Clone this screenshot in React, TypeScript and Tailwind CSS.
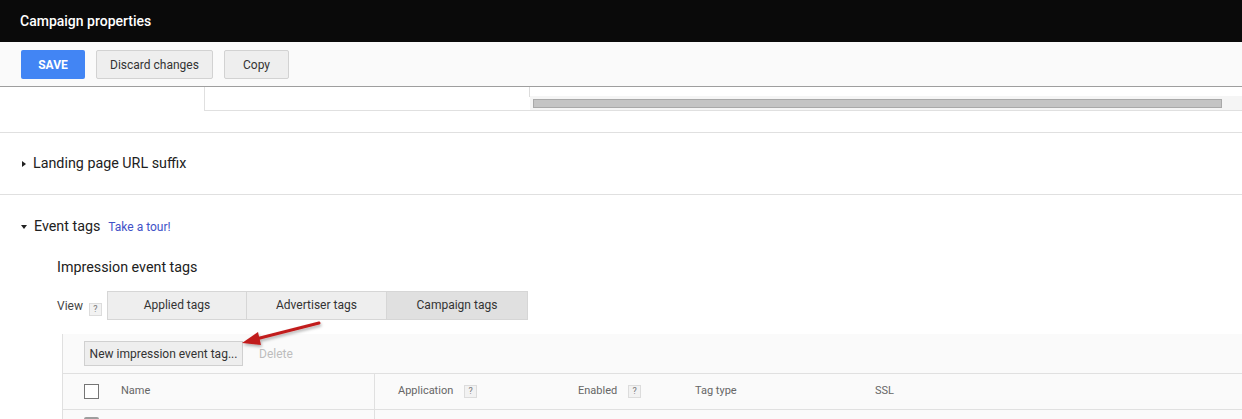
import React from 'react';

const Help = () => (
  <span className="inline-flex h-[13px] w-[13px] items-center justify-center border border-[#dcdcdc] bg-[#f2f2f2] text-[9px] leading-none text-[#777]">
    ?
  </span>
);

export default function App() {
  return (
    <div className="relative h-[419px] w-[1242px] overflow-hidden bg-white font-['Roboto',sans-serif] text-[#212121]">
      {/* header */}
      <div className="flex h-[42px] items-center bg-[#0a0a0a] pl-[20px] text-[14px] font-medium text-white">
        Campaign properties
      </div>

      {/* toolbar */}
      <div className="flex h-[45px] items-center gap-[11px] border-b border-[#9e9e9e] bg-[#fafafa] pl-[21px] pt-[1px]">
        <button className="h-[29px] w-[64px] rounded-[2px] bg-[#4285f4] text-[12px] font-bold text-white">SAVE</button>
        <button className="h-[29px] w-[117px] rounded-[2px] border border-[#d2d2d2] bg-[#eeeeee] text-[12px] text-[#333]">
          Discard changes
        </button>
        <button className="h-[29px] w-[65px] rounded-[2px] border border-[#d2d2d2] bg-[#eeeeee] text-[12px] text-[#333]">
          Copy
        </button>
      </div>

      {/* partial scrolled box */}
      <div className="h-[46px] border-b border-[#e0e0e0]">
        <div className="ml-[204px] flex h-[24px] border-b border-l border-[#e0e0e0]">
          <div className="mb-[13px] w-[326px] border-r border-[#dcdcdc]" />
          <div className="flex flex-1 flex-col">
            <div className="h-[9px]" />
            <div className="flex flex-1 items-center bg-[#f5f5f5] pl-[3px] pr-[20px]">
              <div className="h-[9px] w-[689px] border border-[#a9a9a9] bg-[#c4c4c4]" />
            </div>
          </div>
        </div>
      </div>

      {/* landing page */}
      <div className="flex h-[62px] items-center border-b border-[#e0e0e0] pl-[22px]">
        <span className="mr-[7px] inline-block h-0 w-0 border-y-[3px] border-l-[4px] border-y-transparent border-l-[#212121]" />
        <span className="text-[14.3px] text-[#212121]">Landing page URL suffix</span>
      </div>

      {/* event tags */}
      <div className="flex h-[62px] items-center pl-[21px] pt-[2px]">
        <span className="mr-[7px] inline-block h-0 w-0 border-x-[3px] border-t-[4px] border-x-transparent border-t-[#212121]" />
        <span className="text-[14.3px]">Event tags</span>
        <span className="ml-[8px] text-[12px] text-[#4152c7]">Take a tour!</span>
      </div>

      <div className="pl-[57px] text-[14.3px] leading-[20px] text-[#212121]">Impression event tags</div>

      <div className="mt-[14px] flex h-[29px] items-center pl-[57px]">
        <span className="text-[12px] text-[#444]">View</span>
        <span className="ml-[6px] mr-[5px] mt-[2px]">
          <Help />
        </span>
        <div className="flex h-[29px]">
          <div className="flex w-[140px] items-center justify-center border border-[#d6d6d6] bg-[#eeeeee] pb-[1px] text-[12px] text-[#333]">
            Applied tags
          </div>
          <div className="flex w-[140px] items-center justify-center border border-l-0 border-[#d6d6d6] bg-[#eeeeee] pb-[1px] text-[12px] text-[#333]">
            Advertiser tags
          </div>
          <div className="flex w-[141px] items-center justify-center border border-l-0 border-[#d6d6d6] bg-[#e0e0e0] pb-[1px] text-[12px] text-[#333]">
            Campaign tags
          </div>
        </div>
      </div>

      {/* table panel */}
      <div className="ml-[62px] mt-[14px] border-l border-[#e0e0e0] bg-[#fafafa]">
        <div className="flex h-[39px] items-center pl-[21px]">
          <button className="h-[25px] w-[159px] border border-[#d0d0d0] bg-[#eeeeee] text-[12px] text-[#333]">
            New impression event tag...
          </button>
          <span className="ml-[16px] text-[12px] text-[#bdbdbd]">Delete</span>
        </div>
        <div className="flex h-[37px] items-center border-y border-[#e0e0e0] text-[11px] text-[#666]">
          <div className="flex h-full w-[312px] items-center border-r border-[#e0e0e0] pl-[21px]">
            <span className="h-[15px] w-[15px] border-[1.5px] border-[#757575] bg-white" />
            <span className="ml-[22px]">Name</span>
          </div>
          <div className="flex w-[180px] items-center pl-[23px]">
            <span>Application</span>
            <span className="ml-[11px]">
              <Help />
            </span>
          </div>
          <div className="flex w-[131px] items-center pl-[23px]">
            <span>Enabled</span>
            <span className="ml-[11px]">
              <Help />
            </span>
          </div>
          <div className="w-[189px] pl-[9px]">Tag type</div>
          <div>SSL</div>
        </div>
        <div className="flex h-[20px]">
          <div className="h-full w-[312px] border-r border-[#e0e0e0] pl-[21px] pt-[7px]">
            <span className="block h-[6px] w-[15px] rounded-t-[2px] bg-[#9e9e9e]" />
          </div>
        </div>
      </div>

      {/* red arrow */}
      <svg className="absolute left-[236px] top-[318px]" width="92" height="34" viewBox="0 0 92 34">
        <defs>
          <filter id="sh" x="-20%" y="-50%" width="140%" height="200%">
            <feDropShadow dx="1" dy="2" stdDeviation="1.5" floodColor="#000" floodOpacity="0.3" />
          </filter>
        </defs>
        <g filter="url(#sh)">
          <line x1="83" y1="5" x2="20" y2="21" stroke="#c11d1d" strokeWidth="3" strokeLinecap="round" />
          <polygon points="6,25 22,14 25,27" fill="#c11d1d" />
        </g>
      </svg>
    </div>
  );
}
